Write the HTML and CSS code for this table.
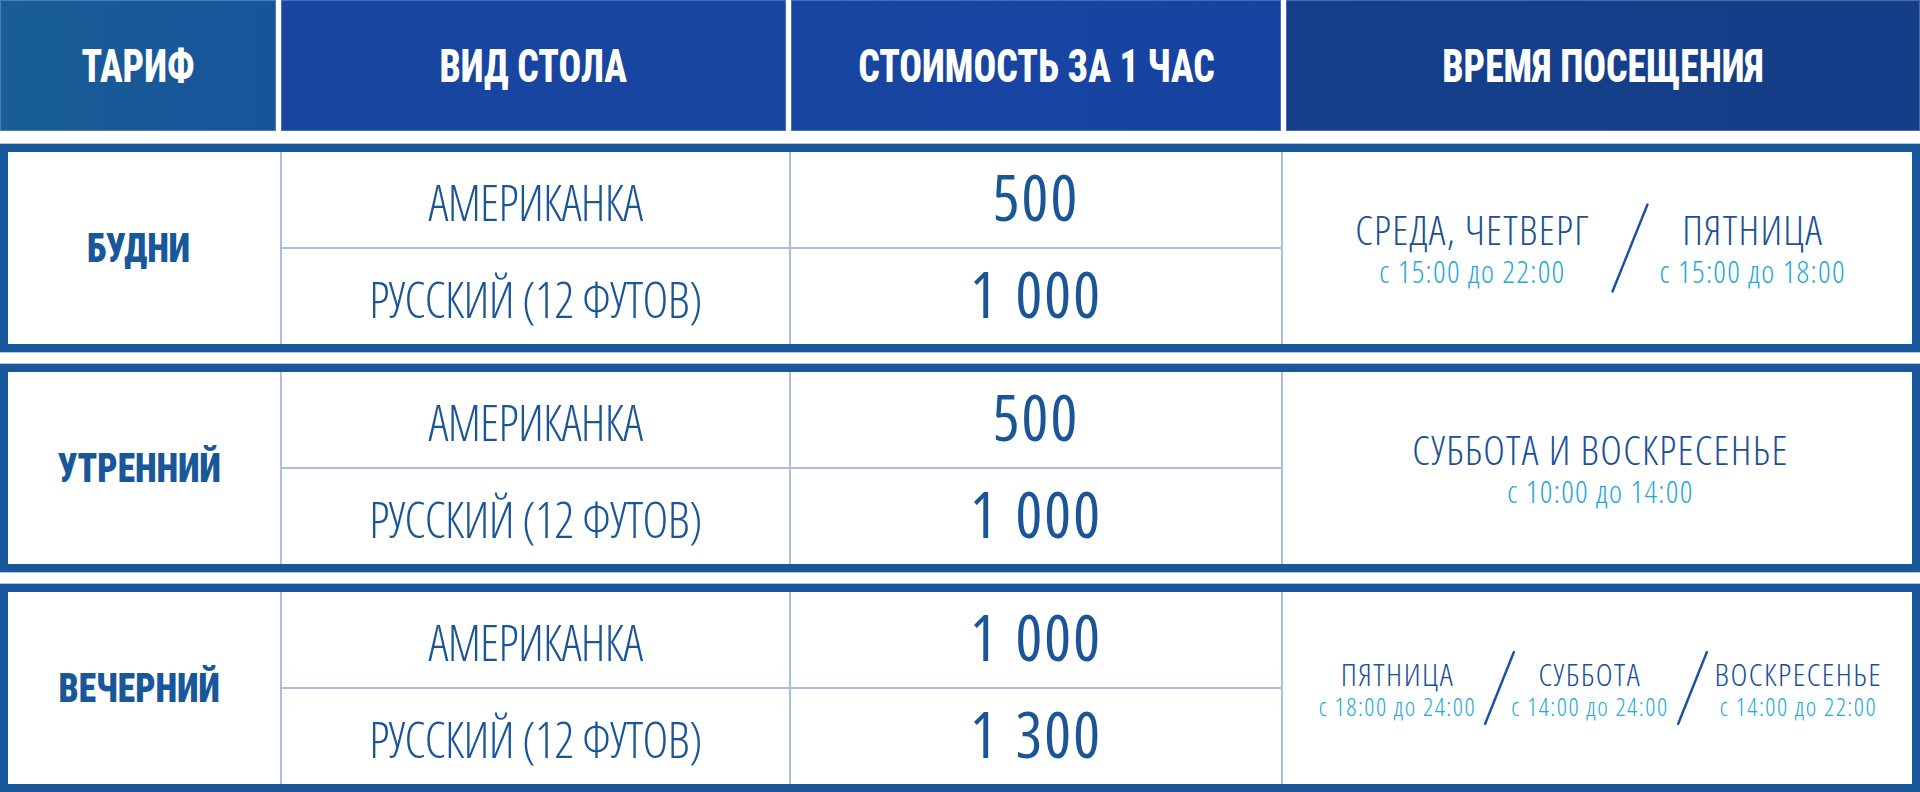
FILE: index.html
```html
<!DOCTYPE html>
<html lang="ru">
<head>
<meta charset="utf-8">
<title>Тарифы</title>
<link rel="stylesheet" href="styles.css">
</head>
<body>
<div class="page">
  <div class="thead">
    <div class="th th1"><span>ТАРИФ</span></div>
    <div class="th th2"><span>ВИД СТОЛА</span></div>
    <div class="th th3"><span>СТОИМОСТЬ ЗА 1 ЧАС</span></div>
    <div class="th th4"><span>ВРЕМЯ ПОСЕЩЕНИЯ</span></div>
  </div>

  <div class="group">
    <div class="tariff"><span>БУДНИ</span></div>
    <div class="cell type">АМЕРИКАНКА</div>
    <div class="cell price">500</div>
    <div class="time time-lg">
      <div class="slot">
        <div class="day">СРЕДА, ЧЕТВЕРГ</div>
        <div class="hours">с 15:00 до 22:00</div>
      </div>
      <svg class="slash slash-lg" viewBox="0 0 38 90" aria-hidden="true"><line x1="1.5" y1="88.5" x2="36.5" y2="1.5"/></svg>
      <div class="slot">
        <div class="day">ПЯТНИЦА</div>
        <div class="hours">с 15:00 до 18:00</div>
      </div>
    </div>
    <div class="cell type">РУССКИЙ (12 ФУТОВ)</div>
    <div class="cell price">1 000</div>
  </div>

  <div class="group">
    <div class="tariff"><span>УТРЕННИЙ</span></div>
    <div class="cell type">АМЕРИКАНКА</div>
    <div class="cell price">500</div>
    <div class="time time-lg">
      <div class="slot">
        <div class="day">СУББОТА И ВОСКРЕСЕНЬЕ</div>
        <div class="hours">с 10:00 до 14:00</div>
      </div>
    </div>
    <div class="cell type">РУССКИЙ (12 ФУТОВ)</div>
    <div class="cell price">1 000</div>
  </div>

  <div class="group">
    <div class="tariff"><span>ВЕЧЕРНИЙ</span></div>
    <div class="cell type">АМЕРИКАНКА</div>
    <div class="cell price">1 000</div>
    <div class="time time-sm">
      <div class="slot">
        <div class="day">ПЯТНИЦА</div>
        <div class="hours">с 18:00 до 24:00</div>
      </div>
      <svg class="slash slash-sm" viewBox="0 0 31 74" aria-hidden="true"><line x1="1.2" y1="72.8" x2="29.8" y2="1.2"/></svg>
      <div class="slot">
        <div class="day">СУББОТА</div>
        <div class="hours">с 14:00 до 24:00</div>
      </div>
      <svg class="slash slash-sm slash-last" viewBox="0 0 31 74" aria-hidden="true"><line x1="1.2" y1="72.8" x2="29.8" y2="1.2"/></svg>
      <div class="slot">
        <div class="day">ВОСКРЕСЕНЬЕ</div>
        <div class="hours">с 14:00 до 22:00</div>
      </div>
    </div>
    <div class="cell type">РУССКИЙ (12 ФУТОВ)</div>
    <div class="cell price">1 300</div>
  </div>
</div>
</body>
</html>
```
FILE: styles.css
```css
html, body {
  margin: 0;
  padding: 0;
  background: #ffffff;
}

.page {
  width: 1920px;
  height: 792px;
  display: flex;
  flex-direction: column;
  gap: 12px;
  overflow: hidden;
}

/* ---------- header ---------- */
.thead {
  height: 131px;
  display: grid;
  grid-template-columns: 276px 505px 490px 1fr;
  gap: 5px;
  margin-bottom: 1px;
}

.th {
  display: flex;
  align-items: center;
  justify-content: center;
  color: #ffffff;
  font-family: "Roboto", "Liberation Sans", sans-serif;
  font-weight: 800;
  font-stretch: 75%;
  font-size: 46px;
  box-shadow: inset 0 0 0 1px rgba(170, 195, 230, 0.35);
}

.th span,
.tariff span {
  display: inline-block;
  white-space: nowrap;
}

.th span {
  transform: scaleX(0.82);
}

.th1 { background: linear-gradient(90deg, #195e96 0%, #17559b 100%); }
.th2 { background: #1745a0; }
.th3 { background: linear-gradient(90deg, #1746a1 0%, #1643a0 100%); }
.th4 { background: linear-gradient(90deg, #153f8b 0%, #153e88 100%); }

/* ---------- groups ---------- */
.group {
  height: 208px;
  box-sizing: border-box;
  border: 8px solid #17579a;
  outline: 1px solid #b3c8e0;
  display: grid;
  grid-template-columns: 272px 507px 490px 1fr;
  grid-template-rows: 95px 95px;
  gap: 2px;
  background: #a9c1dc;
}

.group > div {
  background: #ffffff;
}

.tariff,
.time {
  grid-row: span 2;
}

.tariff {
  display: flex;
  align-items: center;
  justify-content: center;
  padding-right: 10px;
  color: #17579a;
  font-family: "Roboto", "Liberation Sans", sans-serif;
  font-weight: 900;
  font-stretch: 75%;
  font-size: 41px;
}

.tariff span {
  transform: scaleX(0.865);
}

.cell {
  display: flex;
  align-items: center;
  justify-content: center;
  color: #1a5598;
  font-family: "Open Sans", "Liberation Sans", sans-serif;
}

.type {
  font-size: 49px;
  font-weight: 330;
  font-stretch: 75%;
  letter-spacing: -0.7px;
  padding-top: 4px;
}

.price {
  font-size: 63px;
  font-weight: 380;
  font-stretch: 85%;
  letter-spacing: 2px;
  word-spacing: 3px;
  padding-bottom: 7px;
}

/* ---------- visiting time ---------- */
.time {
  display: flex;
  align-items: center;
  justify-content: center;
  font-family: "Open Sans", "Liberation Sans", sans-serif;
  font-weight: 330;
  font-stretch: 75%;
}

.slot {
  display: flex;
  flex-direction: column;
  align-items: center;
  white-space: nowrap;
}

.day {
  color: #1a5096;
  line-height: 1;
}

.hours {
  color: #24a8d8;
  line-height: 1;
}

.time-lg {
  padding-left: 6px;
}

.time-lg .day { font-size: 41px; letter-spacing: 1.3px; }
.time-lg .hours { font-size: 31px; letter-spacing: 1.3px; margin-top: 6px; }

.time-sm {
  padding-left: 6px;
}

.time-sm .day { font-size: 32px; letter-spacing: 1.5px; }
.time-sm .hours { font-size: 25px; letter-spacing: 1.5px; margin-top: 4px; }

.slash line {
  stroke: #1c4fa0;
  stroke-width: 2.4;
  stroke-linecap: round;
}

.slash-lg {
  width: 38px;
  height: 90px;
  margin: 0 11px 0 21px;
}

.slash-sm {
  width: 31px;
  height: 74px;
  margin: 0 -4px 0 8px;
}

.slash-sm.slash-last {
  margin: 0 7px 0 8px;
}
```
